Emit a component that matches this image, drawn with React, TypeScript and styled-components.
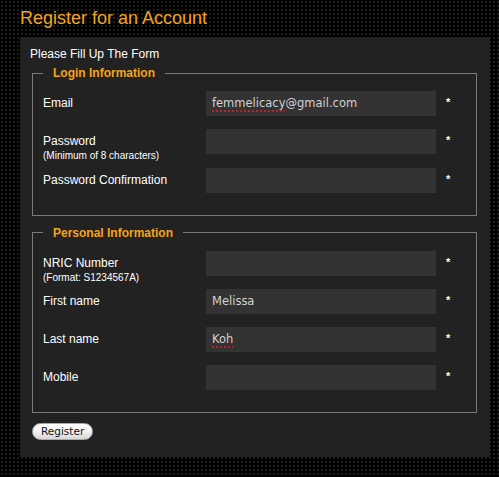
import styled, { createGlobalStyle } from 'styled-components'

const GlobalStyle = createGlobalStyle`
    body {
        margin: 0;
        min-height: 100vh;
        background-color: #000;
        background-image: radial-gradient(circle, #1e1e1e 1px, transparent 1.4px);
        background-size: 4px 4px;
        font-family: 'Liberation Sans', Arial, sans-serif;
    }
`

interface FieldProps {
    label: string
    hint?: string
    value?: string
    typo?: string
}

const Field = ({ label, hint, value, typo }: FieldProps) => (
    <Row>
        <LabelBox>
            <Label>{label}</Label>
            {hint && <Hint>{hint}</Hint>}
        </LabelBox>
        <Input>
            {typo && <Typo>{typo}</Typo>}
            {value}
        </Input>
        <Required>*</Required>
    </Row>
)

const App = () => {
    return (
        <>
            <GlobalStyle />
            <Title>Register for an Account</Title>
            <Panel>
                <Intro>Please Fill Up The Form</Intro>
                <Group>
                    <Legend>Login Information</Legend>
                    <Rows>
                        <Field label="Email" typo="femmelicacy" value="@gmail.com" />
                        <Field label="Password" hint="(Minimum of 8 characters)" />
                        <Field label="Password Confirmation" />
                    </Rows>
                </Group>
                <Group $second>
                    <Legend>Personal Information</Legend>
                    <Rows>
                        <Field label="NRIC Number" hint="(Format: S1234567A)" />
                        <Field label="First name" value="Melissa" />
                        <Field label="Last name" typo="Koh" />
                        <Field label="Mobile" />
                    </Rows>
                </Group>
                <Button type="button">Register</Button>
            </Panel>
        </>
    )
}

const Title = styled.h1`
    margin: 0 0 8px;
    padding: 7px 20px 0;
    font-size: 18px;
    line-height: 22px;
    font-weight: normal;
    color: #f5a21c;
`

const Panel = styled.div`
    box-sizing: border-box;
    width: 470px;
    margin-left: 20px;
    padding: 10px 13px 17px 10px;
    background: #222;
`

const Intro = styled.div`
    font-size: 12px;
    line-height: 14px;
    color: #fff;
`

const Group = styled.fieldset<{ $second?: boolean }>`
    margin: ${({ $second }) => ($second ? '10px' : '5px')} 0 0 2px;
    padding: 11px 9px 22px 10px;
    border: 1px solid #7a7a7a;
    min-inline-size: 0;
`

const Legend = styled.legend`
    padding: 0 10px;
    font-size: 12px;
    line-height: 14px;
    font-weight: bold;
    color: #f5a21c;
`

const Rows = styled.div`
    display: flex;
    flex-direction: column;
    gap: 13.3px;
`

const Row = styled.div`
    display: grid;
    grid-template-columns: 153px 230px auto;
    column-gap: 10px;
    align-items: start;
    height: 25px;
`

const LabelBox = styled.div`
    display: flex;
    flex-direction: column;
    height: 25px;
`

const Label = styled.span`
    font-size: 12px;
    line-height: 25px;
    color: #fff;
`

const Hint = styled.span`
    margin-top: -4px;
    font-size: 10px;
    line-height: 12px;
    color: #fff;
`

const Input = styled.div`
    box-sizing: border-box;
    height: 25px;
    padding: 0 6px;
    background: #333;
    color: #d2d2d2;
    font-family: 'DejaVu Sans', Verdana, sans-serif;
    font-size: 11.5px;
    line-height: 25px;
    white-space: nowrap;
    overflow: hidden;
`

const Typo = styled.span`
    text-decoration: underline dotted #b3262b;
    text-decoration-thickness: 2px;
    text-underline-offset: 3px;
`

const Required = styled.span`
    font-size: 11px;
    font-weight: bold;
    line-height: 22px;
    color: #fff;
`

const Button = styled.button`
    display: block;
    height: 17px;
    margin-top: 10px;
    margin-left: 2px;
    padding: 0 8px;
    border: 1px solid #aaa;
    border-radius: 9px;
    background: linear-gradient(#fff, #f2f2f2 50%, #d6d6d6);
    color: #111;
    font-family: 'DejaVu Sans', Verdana, sans-serif;
    font-size: 10.5px;
    line-height: 15px;
`

export default App
